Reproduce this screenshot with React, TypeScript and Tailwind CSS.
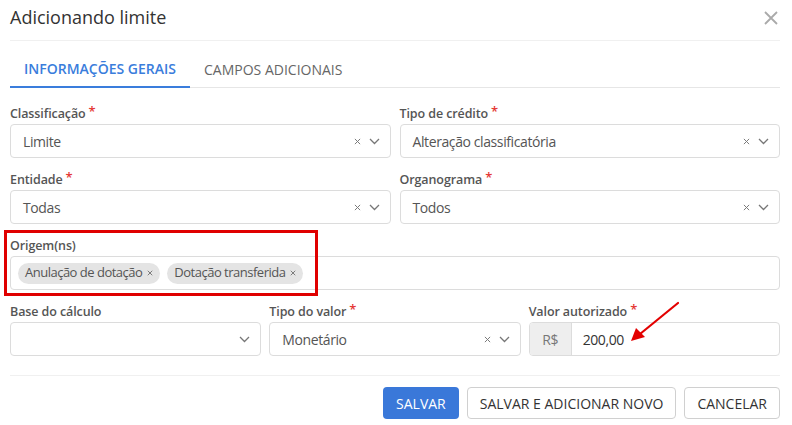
import React from "react";

const font = { fontFamily: '"Open Sans", "Noto Sans", sans-serif' };

function Chevron() {
  return (
    <svg width="11" height="7" viewBox="0 0 11 7" className="shrink-0">
      <path d="M1 1l4.5 4.5L10 1" fill="none" stroke="#777" strokeWidth="1.3" />
    </svg>
  );
}
function SmallX({ size = 8, color = "#777" }: { size?: number; color?: string }) {
  return (
    <svg width={size} height={size} viewBox="0 0 8 8" className="shrink-0">
      <path d="M1 1l6 6M7 1l-6 6" fill="none" stroke={color} strokeWidth="1.1" />
    </svg>
  );
}

function Label({ text, req }: { text: string; req?: boolean }) {
  return (
    <div className="h-[17px] leading-[16px] text-[12.5px] font-semibold text-[#555] mb-[2px] flex items-end tracking-[-0.1px]">
      <span>{text}</span>
      {req && <span className="text-[#e53935] ml-[3px] text-[13px] leading-[12px] self-start">*</span>}
    </div>
  );
}

function Select({ value, clear = true }: { value: string; clear?: boolean }) {
  return (
    <div className="h-[34px] border border-[#dcdcdc] rounded-[4px] flex items-center pl-[12px] pr-[10px] bg-white">
      <span className="flex-1 text-[14px] tracking-[-0.4px] text-[#555]">{value}</span>
      {clear && (
        <span className="mr-[8px] flex">
          <SmallX size={7} />
        </span>
      )}
      <Chevron />
    </div>
  );
}

function Chip({ text }: { text: string }) {
  return (
    <div className="h-[21px] rounded-full bg-[#e4e4e4] flex items-center pl-[7px] pr-[7px] text-[13px] tracking-[-0.5px] text-[#555]">
      <span>{text}</span>
      <span className="ml-[5px] flex">
        <SmallX size={6} color="#666" />
      </span>
    </div>
  );
}

export default function App() {
  return (
    <div className="w-[792px] h-[425px] bg-white relative overflow-hidden" style={font}>
      <div className="pl-[10px] pr-[12px]">
        {/* header */}
        <div className="h-[41px] border-b border-[#f0f0f0] flex items-center justify-between">
          <span className="text-[18px] text-[#333] -mt-[5px]">Adicionando limite</span>
          <span className="-mt-[5px] mr-[2px] flex">
            <svg width="14" height="14" viewBox="0 0 14 14">
              <path d="M1 1l12 12M13 1L1 13" fill="none" stroke="#aaa" strokeWidth="1.8" />
            </svg>
          </span>
        </div>
        {/* tabs */}
        <div className="mt-[10px] flex border-b border-[#e6e6e6] h-[37px]">
          <div className="px-[14px] h-[37px] flex items-center border-b-2 border-[#3a7ddc] -mb-[1px] text-[14px] font-semibold text-[#3a7ddc]">
            INFORMAÇÕES GERAIS
          </div>
          <div className="px-[14px] h-[36px] flex items-center text-[14px] text-[#666]">
            CAMPOS ADICIONAIS
          </div>
        </div>

        {/* form */}
        <div className="mt-[17px] flex flex-col gap-[13px]">
          <div className="grid grid-cols-2 gap-x-[9px]">
            <div>
              <Label text="Classificação" req />
              <Select value="Limite" />
            </div>
            <div>
              <Label text="Tipo de crédito" req />
              <Select value="Alteração classificatória" />
            </div>
          </div>
          <div className="grid grid-cols-2 gap-x-[9px]">
            <div>
              <Label text="Entidade" req />
              <Select value="Todas" />
            </div>
            <div>
              <Label text="Organograma" req />
              <Select value="Todos" />
            </div>
          </div>
          <div>
            <Label text="Origem(ns)" />
            <div className="h-[34px] border border-[#dcdcdc] rounded-[4px] flex items-center pl-[7px] gap-[7px] bg-white">
              <Chip text="Anulação de dotação" />
              <Chip text="Dotação transferida" />
            </div>
          </div>
          <div className="grid grid-cols-3 gap-x-[8px]">
            <div>
              <Label text="Base do cálculo" />
              <Select value="" clear={false} />
            </div>
            <div>
              <Label text="Tipo do valor" req />
              <Select value="Monetário" />
            </div>
            <div>
              <Label text="Valor autorizado" req />
              <div className="h-[34px] border border-[#dcdcdc] rounded-[4px] flex bg-white overflow-hidden">
                <div className="w-[42px] bg-[#eeeeee] border-r border-[#dcdcdc] flex items-center justify-center text-[14px] tracking-[-0.4px] text-[#777]">
                  R$
                </div>
                <div className="flex items-center pl-[11px] text-[14px] tracking-[-0.4px] text-[#333]">200,00</div>
              </div>
            </div>
          </div>
        </div>

        {/* footer */}
        <div className="mt-[19px] border-t border-[#f0f0f0] pt-[11px] flex justify-end gap-[8px]">
          <button className="h-[32px] px-[13px] rounded-[4px] bg-[#3a78d9] text-white text-[14px]">SALVAR</button>
          <button className="h-[32px] px-[12px] rounded-[4px] border border-[#d0d0d0] bg-white text-[#333] text-[14px]">
            SALVAR E ADICIONAR NOVO
          </button>
          <button className="h-[32px] px-[12px] rounded-[4px] border border-[#d0d0d0] bg-white text-[#333] text-[14px]">
            CANCELAR
          </button>
        </div>
      </div>

      {/* annotations */}
      <div className="absolute left-[4px] top-[230px] w-[314px] h-[66px] border-[3px] border-[#e00000] pointer-events-none" />
      <svg className="absolute left-0 top-0 pointer-events-none" width="792" height="425">
        <path d="M678 303 L640 334" stroke="#e30000" strokeWidth="2.2" fill="none" strokeLinecap="round" />
        <path d="M631 341 L636 328 L645 337 Z" fill="#e30000" />
      </svg>
    </div>
  );
}
